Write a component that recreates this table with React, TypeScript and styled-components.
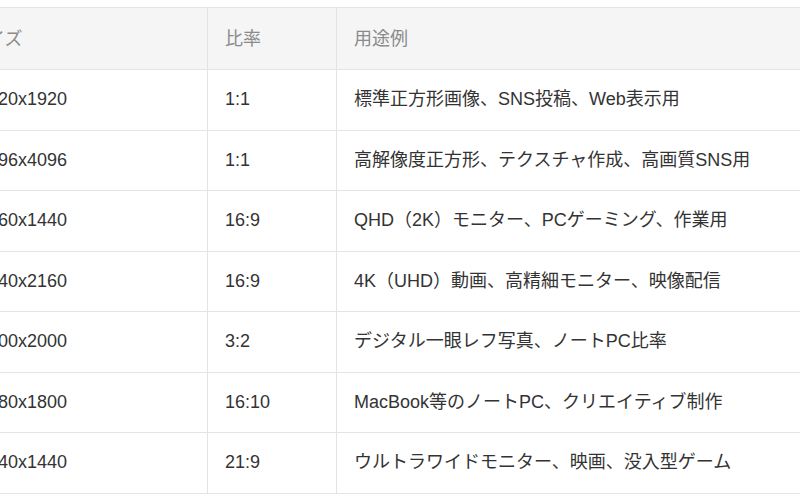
import React from 'react';
import styled, { createGlobalStyle } from 'styled-components';

const GlobalStyle = createGlobalStyle`
  html, body {
    margin: 0;
    padding: 0;
    background: #ffffff;
  }
  body {
    font-family: "Liberation Sans", "Noto Sans CJK JP", sans-serif;
    -webkit-font-smoothing: antialiased;
  }
`;

const Viewport = styled.div`
  width: 800px;
  height: 500px;
  overflow: hidden;
  padding-top: 7px;
  box-sizing: border-box;
`;

const Table = styled.table`
  border-collapse: collapse;
  width: 900px;
  margin-left: -49px;
  table-layout: fixed;
  font-size: 18px;
`;

const Col = styled.col<{ $w?: number }>`
  width: ${(p) => (p.$w ? `${p.$w}px` : 'auto')};
`;

const HeadCell = styled.th`
  background: #f5f5f5;
  color: #8a8a8a;
  font-weight: 400;
  text-align: left;
  padding: 21px 17px 20px;
  line-height: 20px;
  border: 1px solid #e4e4e4;
  white-space: nowrap;
`;

const Cell = styled.td<{ $indent?: boolean }>`
  color: #333333;
  padding: 20px 17px;
  padding-left: ${(p) => (p.$indent ? '26px' : '17px')};
  line-height: 19.5px;
  border: 1px solid #e4e4e4;
  white-space: nowrap;
`;

const rows = [
  ['1920x1920', '1:1', '標準正方形画像、SNS投稿、Web表示用'],
  ['4096x4096', '1:1', '高解像度正方形、テクスチャ作成、高画質SNS用'],
  ['2560x1440', '16:9', 'QHD（2K）モニター、PCゲーミング、作業用'],
  ['3840x2160', '16:9', '4K（UHD）動画、高精細モニター、映像配信'],
  ['3000x2000', '3:2', 'デジタル一眼レフ写真、ノートPC比率'],
  ['2880x1800', '16:10', 'MacBook等のノートPC、クリエイティブ制作'],
  ['3440x1440', '21:9', 'ウルトラワイドモニター、映画、没入型ゲーム'],
];

export default function App() {
  return (
    <>
      <GlobalStyle />
      <Viewport>
        <Table>
          <colgroup>
            <Col $w={256} />
            <Col $w={129} />
            <Col />
          </colgroup>
          <thead>
            <tr>
              <HeadCell>サイズ</HeadCell>
              <HeadCell>比率</HeadCell>
              <HeadCell>用途例</HeadCell>
            </tr>
          </thead>
          <tbody>
            {rows.map((r) => (
              <tr key={r[0]}>
                <Cell $indent>{r[0]}</Cell>
                <Cell>{r[1]}</Cell>
                <Cell>{r[2]}</Cell>
              </tr>
            ))}
          </tbody>
        </Table>
      </Viewport>
    </>
  );
}
